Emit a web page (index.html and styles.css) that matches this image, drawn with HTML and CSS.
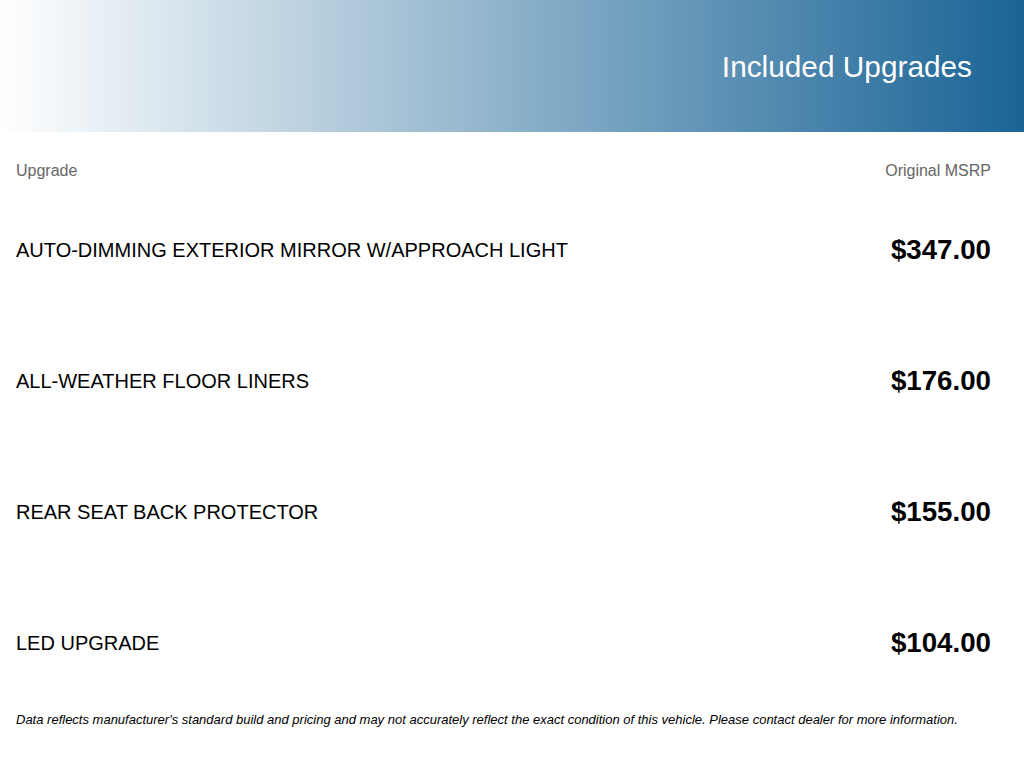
FILE: index.html
```html
<!DOCTYPE html>
<html lang="en">
<head>
<meta charset="utf-8">
<title>Included Upgrades</title>
<link rel="stylesheet" href="styles.css">
</head>
<body>
<header class="banner">
  <h1 class="banner-title">Included Upgrades</h1>
</header>
<main class="content">
  <div class="col-heads">
    <span>Upgrade</span>
    <span>Original MSRP</span>
  </div>
  <ul class="items">
    <li class="item"><span class="item-name">AUTO-DIMMING EXTERIOR MIRROR W/APPROACH LIGHT</span><span class="item-price">$347.00</span></li>
    <li class="item"><span class="item-name">ALL-WEATHER FLOOR LINERS</span><span class="item-price">$176.00</span></li>
    <li class="item"><span class="item-name">REAR SEAT BACK PROTECTOR</span><span class="item-price">$155.00</span></li>
    <li class="item"><span class="item-name">LED UPGRADE</span><span class="item-price">$104.00</span></li>
  </ul>
  <p class="disclaimer">Data reflects manufacturer's standard build and pricing and may not accurately reflect the exact condition of this vehicle. Please contact dealer for more information.</p>
</main>
</body>
</html>
```

FILE: styles.css
```css
* { box-sizing: border-box; }
html, body {
  margin: 0;
  padding: 0;
  background: #fff;
  font-family: "Liberation Sans", Arial, sans-serif;
  color: #000;
}
.banner {
  height: 132px;
  background: linear-gradient(to right, #ffffff 0%, #1a6496 100%);
  display: flex;
  justify-content: flex-end;
  align-items: flex-start;
  padding: 49px 52px 0 0;
}
.banner-title {
  margin: 0;
  font-weight: normal;
  font-size: 29.8px;
  line-height: 36px;
  color: #fff;
}
.content {
  padding: 0 33px 0 16px;
}
.col-heads {
  display: flex;
  justify-content: space-between;
  margin-top: 29px;
  font-size: 16px;
  line-height: 20px;
  color: #666;
}
.items {
  list-style: none;
  margin: 53px 0 0 0;
  padding: 0;
  display: flex;
  flex-direction: column;
  gap: 99px;
}
.item {
  display: flex;
  justify-content: space-between;
  align-items: center;
  height: 32px;
}
.item-name {
  font-size: 20px;
  line-height: 24px;
}
.item-price {
  font-size: 27.7px;
  font-weight: bold;
  line-height: 32px;
}
.disclaimer {
  margin: 53px 0 0 0;
  font-size: 13px;
  line-height: 16px;
  font-style: italic;
}
```
